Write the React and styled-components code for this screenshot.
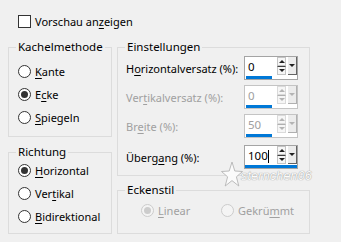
import React from "react";
import styled, { createGlobalStyle, css } from "styled-components";

const GlobalStyle = createGlobalStyle`
  html, body {
    margin: 0;
    padding: 0;
    background: #f0f0f0;
  }
  body {
    font-family: "Noto Sans", "Liberation Sans", sans-serif;
    font-size: 11px;
    color: #000;
  }
`;

const grey = "#a0a0a0";

const Dialog = styled.div`
  position: relative;
  width: 341px;
  height: 242px;
  background: #f0f0f0;
  overflow: hidden;
`;

const TopRow = styled.div`
  height: 47px;
  box-sizing: border-box;
  padding: 15px 0 0 18px;
`;

const Check = styled.label`
  display: flex;
  align-items: center;
  gap: 4px;
  line-height: 13px;
`;

const CheckBox = styled.span`
  width: 11px;
  height: 11px;
  border: 1px solid #333;
  background: #fff;
`;

const Columns = styled.div`
  display: flex;
  gap: 5px;
  padding-left: 8px;
`;

const Column = styled.div`
  display: flex;
  flex-direction: column;
  width: ${(p) => p.$width}px;
  gap: ${(p) => p.$gap}px;
`;

const Group = styled.div`
  display: flex;
  flex-direction: column;
  height: ${(p) => p.$height}px;
  box-sizing: border-box;
  border: 1px solid #dcdcdc;
`;

const Title = styled.div`
  align-self: flex-start;
  margin: -9px 0 0 7px;
  padding: 0 2px;
  line-height: 16px;
  font-size: 11.5px;
  background: #f0f0f0;
`;

const RadioList = styled.div`
  display: flex;
  flex-direction: column;
  margin-top: ${(p) => p.$top}px;
  padding-left: 9px;
`;

const RadioRow = styled.div`
  display: flex;
  margin-top: ${(p) => p.$top || 0}px;
  padding-left: ${(p) => p.$left || 0}px;
`;

const Radio = styled.label`
  display: flex;
  align-items: center;
  gap: 4px;
  height: 23px;
  width: ${(p) => (p.$width ? `${p.$width}px` : "auto")};
  color: ${(p) => (p.$disabled ? grey : "#000")};
`;

const Circle = styled.span`
  flex: none;
  width: 11px;
  height: 11px;
  border-radius: 50%;
  border: 1px solid ${(p) => (p.$disabled ? "#cccccc" : "#333")};
  background: ${(p) => (p.$disabled ? "#f4f4f4" : "#fff")};
  display: flex;
  align-items: center;
  justify-content: center;

  ${(p) =>
    p.$checked &&
    css`
      &::after {
        content: "";
        width: 7px;
        height: 7px;
        border-radius: 50%;
        background: ${p.$disabled ? "#cccccc" : "#333"};
      }
    `}
`;

const Key = styled.span`
  text-decoration: underline;
  text-underline-offset: 2px;
`;

const Fields = styled.div`
  display: grid;
  grid-template-columns: 1fr 54px;
  align-items: center;
  row-gap: 5px;
  margin-top: 1px;
  padding: 0 11px 0 8px;
`;

const FieldLabel = styled.span`
  color: ${(p) => (p.$disabled ? grey : "#000")};
  margin-top: ${(p) => p.$top || 0}px;
`;

const Spin = styled.div`
  display: flex;
  flex-direction: column;
  height: 24px;
  box-sizing: border-box;
  border: 1px solid ${(p) => (p.$disabled ? "#c4c4c4" : "#a4a4a4")};
  background: #fff;
  margin-top: ${(p) => p.$top || 0}px;
`;

const SpinTop = styled.div`
  display: flex;
  height: 18px;
`;

const Value = styled.span`
  flex: 1;
  display: flex;
  align-items: center;
  padding: 2px 0 0 3px;
  line-height: 14px;
  font-size: 11.5px;
  color: ${(p) => (p.$disabled ? grey : "#000")};
`;

const Caret = styled.span`
  width: 1px;
  height: 13px;
  background: #000;
`;

const Arrows = styled.div`
  display: flex;
  flex-direction: column;
  width: 9px;
  margin: 0 2px 0 0;
`;

const ArrowHalf = styled.div`
  flex: 1;
  display: flex;
  align-items: center;
  justify-content: center;
  box-sizing: border-box;
  border: 1px solid ${(p) => (p.$disabled ? "#dadada" : "#c4c4c4")};
  border-top-color: ${(p) =>
    p.$down ? (p.$disabled ? "#b0b0b0" : "#404040") : p.$disabled ? "#dadada" : "#c4c4c4"};
  background: #f6f6f6;
`;

const Tri = styled.span`
  width: 0;
  height: 0;
  border-left: 3px solid transparent;
  border-right: 3px solid transparent;
  ${(p) =>
    p.$down
      ? css`border-top: 3px solid ${p.$disabled ? "#b4b4b4" : "#202020"};`
      : css`border-bottom: 3px solid ${p.$disabled ? "#b4b4b4" : "#202020"};`}
`;

const DropBtn = styled.div`
  width: 9px;
  display: flex;
  justify-content: center;
  padding-top: 7px;
  box-sizing: border-box;
  background: #ececec;
  border-right: 1px solid ${(p) => (p.$disabled ? "#b0b0b0" : "#646464")};
  border-bottom: 1px solid ${(p) => (p.$disabled ? "#b0b0b0" : "#646464")};
`;

const Bar = styled.div`
  height: 3px;
  margin-top: 1px;
  width: ${(p) => (p.$full ? "100%" : "26px")};
  margin-left: ${(p) => (p.$full ? 0 : 1)}px;
  background: #0078d7;
`;

// faint "sternchen06" watermark lying over the dialog
const Watermark = styled.div`
  position: absolute;
  left: 221px;
  top: 161px;
  display: flex;
  align-items: flex-end;
  pointer-events: none;
`;

const MarkText = styled.span`
  font-family: "Liberation Sans", sans-serif;
  font-style: italic;
  font-size: 12.5px;
  letter-spacing: 0.2px;
  color: #fbfbfb;
  text-shadow: 0 0 1px #9a9a9a, 0 0 1px #b0b0b0;
  margin: 0 0 4px -2px;
`;

const SpinBox = ({ value, disabled, focused, top }) => (
  <Spin $disabled={disabled} $top={top}>
    <SpinTop>
      <Value $disabled={disabled}>
        {value}
        {focused && <Caret />}
      </Value>
      <Arrows>
        <ArrowHalf $disabled={disabled}>
          <Tri $disabled={disabled} />
        </ArrowHalf>
        <ArrowHalf $down $disabled={disabled}>
          <Tri $down $disabled={disabled} />
        </ArrowHalf>
      </Arrows>
      <DropBtn $disabled={disabled}>
        <Tri $down $disabled={disabled} />
      </DropBtn>
    </SpinTop>
    <Bar $full={focused} />
  </Spin>
);

const RadioItem = ({ checked, disabled, width, children }) => (
  <Radio $disabled={disabled} $width={width}>
    <Circle $checked={checked} $disabled={disabled} />
    <span>{children}</span>
  </Radio>
);

export default function App() {
  return (
    <Dialog>
      <GlobalStyle />
      <TopRow>
        <Check>
          <CheckBox />
          <span>
            Vorschau an<Key>z</Key>eigen
          </span>
        </Check>
      </TopRow>

      <Columns>
        <Column $width={104} $gap={15}>
          <Group $height={90}>
            <Title>Kachelmethode</Title>
            <RadioList $top={5}>
              <RadioItem>
                <Key>K</Key>ante
              </RadioItem>
              <RadioItem checked>
                E<Key>c</Key>ke
              </RadioItem>
              <RadioItem>
                <Key>S</Key>piegeln
              </RadioItem>
            </RadioList>
          </Group>
          <Group $height={82}>
            <Title>Richtung</Title>
            <RadioList $top={-1}>
              <RadioItem checked>
                <Key>H</Key>orizontal
              </RadioItem>
              <RadioItem>
                Ver<Key>t</Key>ikal
              </RadioItem>
              <RadioItem>
                <Key>B</Key>idirektional
              </RadioItem>
            </RadioList>
          </Group>
        </Column>

        <Column $width={193} $gap={14}>
          <Group $height={129}>
            <Title>Einstellungen</Title>
            <Fields>
              <FieldLabel>
                H<Key>o</Key>rizontalversatz (%):
              </FieldLabel>
              <SpinBox value="0" />
              <FieldLabel $disabled>
                Ver<Key>t</Key>ikalversatz (%):
              </FieldLabel>
              <SpinBox value="0" disabled />
              <FieldLabel $disabled>
                Br<Key>e</Key>ite (%):
              </FieldLabel>
              <SpinBox value="50" disabled />
              <FieldLabel $top={2}>
                Überg<Key>a</Key>ng (%):
              </FieldLabel>
              <SpinBox value="100" focused top={2} />
            </Fields>
          </Group>
          <Group $height={44}>
            <Title>Eckenstil</Title>
            <RadioRow $top={1} $left={23}>
              <RadioItem checked disabled width={80}>
                <Key>L</Key>inear
              </RadioItem>
              <RadioItem disabled>
                Gekrü<Key>m</Key>mt
              </RadioItem>
            </RadioRow>
          </Group>
        </Column>
      </Columns>

      <Watermark>
        <svg width="22" height="26" viewBox="0 0 22 26">
          <path
            d="M11 1 L13.8 10 L21.5 10.5 L15.4 15.8 L17.8 25 L11 19.6 L4.2 25 L6.6 15.8 L0.5 10.5 L8.2 10 Z"
            fill="#fbfbfb"
            stroke="#b4b4b4"
            strokeWidth="0.9"
          />
        </svg>
        <MarkText>sternchen06</MarkText>
      </Watermark>
    </Dialog>
  );
}
